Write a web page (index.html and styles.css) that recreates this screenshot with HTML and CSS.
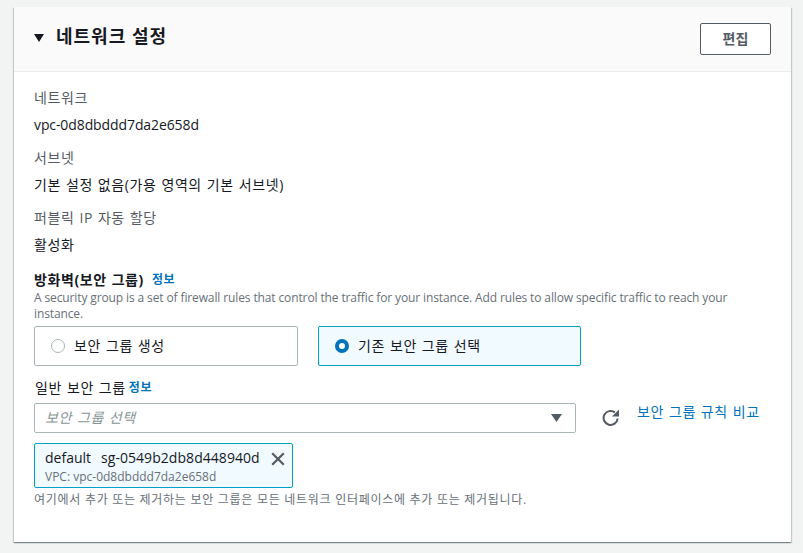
FILE: index.html
```html
<!DOCTYPE html>
<html lang="ko">
<head>
<meta charset="utf-8">
<title>네트워크 설정</title>
<link rel="stylesheet" href="styles.css">
</head>
<body>
<section class="card">
  <header class="card-head">
    <div class="head-title">
      <svg class="caret" width="10" height="8" viewBox="0 0 10 8"><path d="M0 0h10L5 8z" fill="#16191f"/></svg>
      <h2>네트워크 설정</h2>
    </div>
    <button class="edit">편집</button>
  </header>
  <div class="card-body">
    <div class="kv"><div class="k ko">네트워크</div><div class="v latin">vpc-0d8dbddd7da2e658d</div></div>
    <div class="kv"><div class="k ko">서브넷</div><div class="v ko">기본 설정 없음(가용 영역의 기본 서브넷)</div></div>
    <div class="kv"><div class="k ko">퍼블릭 IP 자동 할당</div><div class="v ko">활성화</div></div>
    <div class="fw-label"><b class="ko">방화벽(보안 그룹)</b><a class="info ko">정보</a></div>
    <p class="desc">A security group is a set of firewall rules that control the traffic for your instance. Add rules to allow specific traffic to reach your instance.</p>
    <div class="tiles">
      <div class="tile ko"><span class="radio"></span>보안 그룹 생성</div>
      <div class="tile selected ko"><span class="radio on"></span>기존 보안 그룹 선택</div>
    </div>
    <div class="sg-label"><span class="ko">일반 보안 그룹</span><a class="info ko">정보</a></div>
    <div class="select-row">
      <div class="select"><span class="ph ko">보안 그룹 선택</span><svg width="11" height="8" viewBox="0 0 11 8"><path d="M0 0h11L5.5 8z" fill="#545b64"/></svg></div>
      <svg class="refresh" width="18" height="18" viewBox="0 0 18 18"><path d="M15.6 9.5A7 7 0 1 1 12.9 3.4" fill="none" stroke="#545b64" stroke-width="2"/><path d="M17 .6v7h-7z" fill="#545b64"/></svg>
      <a class="compare ko">보안 그룹 규칙 비교</a>
    </div>
    <div class="token">
      <div class="token-text">
        <div class="token-main"><span>default</span><span class="sg">sg-0549b2db8d448940d</span></div>
        <div class="token-sub">VPC: vpc-0d8dbddd7da2e658d</div>
      </div>
      <svg class="close" width="14" height="14" viewBox="0 0 14 14"><path d="M1.2 1.2l11.6 11.6M12.8 1.2L1.2 12.8" stroke="#545b64" stroke-width="2.2" fill="none"/></svg>
    </div>
    <p class="hint">여기에서 추가 또는 제거하는 보안 그룹은 모든 네트워크 인터페이스에 추가 또는 제거됩니다.</p>
  </div>
</section>
</body>
</html>
```
FILE: styles.css
```css
* { box-sizing: border-box; }
html, body { height: 100%; }
body {
  margin: 0;
  padding: 7px 12px 0 14px;
  background: #f2f3f3;
  color: #16191f;
  font-family: "Open Sans", "Noto Sans CJK KR", sans-serif;
  font-size: 14px;
  line-height: 20px;
  overflow: hidden;
}
.ko { letter-spacing: .58px; word-spacing: .8px; }
.latin { letter-spacing: -.1px; }
.card {
  background: #fff;
  height: 535px;
  box-shadow: 0 1px 1px 0 rgba(0,28,36,.3), 1px 1px 1px 0 rgba(0,28,36,.15), -1px 1px 1px 0 rgba(0,28,36,.15);
}
.card-head {
  height: 65px;
  background: #fafafa;
  border-bottom: 1px solid #eaeded;
  display: flex;
  align-items: center;
  justify-content: space-between;
  padding: 0 20px;
}
.head-title { display: flex; align-items: center; gap: 12px; margin-top: -7px; }
.caret { margin-top: 5px; }
h2 { margin: 0; font-size: 18px; line-height: 24px; font-weight: 700; letter-spacing: 1px; }
.edit {
  width: 71px;
  height: 32px;
  background: #fff;
  border: 1px solid #545b64;
  border-radius: 2px;
  color: #545b64;
  font: 700 14px/20px "Open Sans", "Noto Sans CJK KR", sans-serif;
  padding: 0;
}
.card-body { padding: 16px 20px 0; }
.kv { height: 60px; }
.k { color: #545b64; height: 20px; }
.v { margin-top: 7px; }
.fw-label { margin-top: 2px; display: flex; align-items: center; gap: 8px; height: 20px; }
.info { color: #0073bb; font-size: 12px; font-weight: 700; }
.desc { margin: 0; color: #687078; font-size: 12px; line-height: 16px; letter-spacing: -.12px; }
.tiles { display: flex; gap: 20px; margin-top: 4px; }
.tile {
  width: 264px;
  height: 40px;
  border: 1px solid #aab7b8;
  border-radius: 2px;
  display: flex;
  align-items: center;
  padding-left: 16px;
  gap: 9px;
}
.selected { border-color: #00a1c9; background: #f1faff; width: 263px; }
.radio {
  width: 14px;
  height: 14px;
  border: 1px solid #aab7b8;
  border-radius: 50%;
  background: #fff;
  flex: none;
}
.on { border: 4px solid #0073bb; }
.sg-label { margin-top: 12px; height: 20px; display: flex; align-items: center; gap: 3px; padding-left: 1px; }
.select-row { display: flex; align-items: center; margin-top: 5px; }
.select {
  width: 542px;
  height: 30px;
  border: 1px solid #aab7b8;
  border-radius: 2px;
  display: flex;
  align-items: center;
  justify-content: space-between;
  padding: 0 13px 0 10px;
}
.ph { color: #879596; font-style: italic; font-size: 14px; }
.refresh { margin: 0 0 0 26px; }
.compare { color: #0073bb; margin-left: 17px; margin-top: -12px; }
.token {
  width: 259px;
  height: 45px;
  margin-top: 10px;
  border: 1px solid #00a1c9;
  border-radius: 2px;
  background: #f1faff;
  display: flex;
  justify-content: space-between;
  padding: 4px 7px 0 10px;
}
.token-main { display: flex; gap: 10px; line-height: 20px; font-size: 14px; }
.sg { letter-spacing: .05px; }
.token-sub { color: #687078; font-size: 12px; line-height: 16px; margin-top: 1px; }
.close { margin-top: 4px; }
.hint { margin: 4px 0 0; color: #687078; font-size: 12px; line-height: 16px; letter-spacing: .72px; }
```
